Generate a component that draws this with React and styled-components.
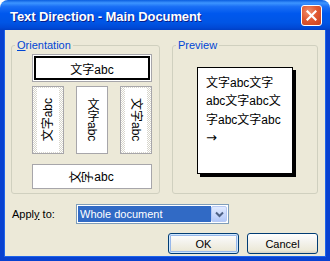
import React from "react";
import styled, { createGlobalStyle } from "styled-components";

const Global = createGlobalStyle`
  html, body {
    margin: 0;
    padding: 0;
    background: #ffffff;
  }
  body {
    font-family: "Liberation Sans", "Noto Sans CJK SC", sans-serif;
    font-size: 11px;
    color: #000;
  }
`;

const cjk = `"Liberation Sans", "Noto Sans CJK SC", sans-serif`;

const App = () => {
  return (
    <>
      <Global />
      <Window>
        <TitleBar>
          <Title>Text Direction - Main Document</Title>
          <CloseButton aria-label="Close">
            <svg width="11" height="11" viewBox="0 0 11 11">
              <path d="M1.5 1.5 L9.5 9.5 M9.5 1.5 L1.5 9.5" stroke="#fff" strokeWidth="2.2" strokeLinecap="square" />
            </svg>
          </CloseButton>
        </TitleBar>
        <Body>
          <Groups>
            <Group $width={149}>
              <Legend>
                <u>O</u>rientation
              </Legend>
              <OptionStack>
                <WideOption>
                  <Selected>文字abc</Selected>
                </WideOption>
                <TallRow>
                  <TallOption $dither>
                    <TallInner>
                      <SidewaysText $flip>文字abc</SidewaysText>
                    </TallInner>
                  </TallOption>
                  <TallOption>
                    <TallInner>
                      <UprightColumn>
                        <UprightChar>文字</UprightChar>
                        <SidewaysText>abc</SidewaysText>
                      </UprightColumn>
                    </TallInner>
                  </TallOption>
                  <TallOption $dither>
                    <TallInner>
                      <SidewaysText>文字abc</SidewaysText>
                    </TallInner>
                  </TallOption>
                </TallRow>
                <WideOption $short>
                  <OptionLabel>
                    <TurnedChar>文</TurnedChar>
                    <TurnedChar>字</TurnedChar>abc
                  </OptionLabel>
                </WideOption>
              </OptionStack>
            </Group>
            <Group $width={146}>
              <Legend>Preview</Legend>
              <PreviewArea>
                <Page>
                  <PageLine>文字abc文字</PageLine>
                  <PageLine>abc文字abc文</PageLine>
                  <PageLine>字abc文字abc</PageLine>
                  <PageLine $arrow>→</PageLine>
                </Page>
              </PreviewArea>
            </Group>
          </Groups>
          <ApplyRow>
            <FieldLabel>
              Appl<u>y</u> to:
            </FieldLabel>
            <Combo>
              <ComboValue>Whole document</ComboValue>
              <ComboButton>
                <svg width="9" height="7" viewBox="0 0 9 7">
                  <path d="M1 1.5 L4.5 5 L8 1.5" stroke="#4d6185" strokeWidth="2" fill="none" />
                </svg>
              </ComboButton>
            </Combo>
          </ApplyRow>
          <ButtonRow>
            <Button $default>OK</Button>
            <Button>Cancel</Button>
          </ButtonRow>
        </Body>
      </Window>
    </>
  );
};

const Window = styled.div`
  width: 330px;
  height: 261px;
  display: flex;
  flex-direction: column;
  overflow: hidden;
  border-radius: 8px 8px 0 0;
`;

const TitleBar = styled.div`
  height: 30px;
  flex: none;
  display: flex;
  align-items: center;
  justify-content: space-between;
  padding: 2px 8px 0 10px;
  box-sizing: border-box;
  background: linear-gradient(
    to bottom,
    #0a5ddf 0%,
    #3d95ff 10%,
    #1a6ff5 22%,
    #0058ee 45%,
    #0055e5 75%,
    #0049d6 92%,
    #003fc4 100%
  );
`;

const Title = styled.span`
  font-family: "Liberation Sans", sans-serif;
  font-weight: bold;
  font-size: 13px;
  color: #fff;
  text-shadow: 1px 1px 0 #0a1e8a;
  letter-spacing: -0.1px;
`;

const CloseButton = styled.div`
  width: 21px;
  height: 21px;
  box-sizing: border-box;
  border: 1px solid #fff;
  border-radius: 3px;
  margin-bottom: 2px;
  display: flex;
  align-items: center;
  justify-content: center;
  background: radial-gradient(circle at 35% 30%, #f0906e 0%, #e15a32 45%, #c8401f 100%);
`;

const Body = styled.div`
  flex: 1;
  background: #ece9d8;
  border-left: 4px solid #0841d0;
  border-right: 4px solid #0841d0;
  border-bottom: 4px solid #0841d0;
  box-shadow: inset 1px 0 0 #1d63ea, inset -1px 0 0 #1d63ea, inset 0 -1px 0 #1d63ea;
  padding: 9px 8px 0 7px;
  display: flex;
  flex-direction: column;
`;

const Groups = styled.div`
  display: flex;
  gap: 12px;
  height: 155px;
`;

const Group = styled.fieldset`
  margin: 0;
  padding: 0;
  min-width: 0;
  width: ${(p) => p.$width}px;
  box-sizing: border-box;
  border: 1px solid #d0d0bf;
  border-radius: 3px;
`;

const Legend = styled.legend`
  margin-left: 3px;
  padding: 0 2px;
  font-size: 11px;
  line-height: 12px;
  color: #0046d5;
  font-family: "Liberation Sans", sans-serif;
`;

const OptionStack = styled.div`
  display: flex;
  flex-direction: column;
  width: 120px;
  padding: 3px 0 0 20px;
`;

const WideOption = styled.div`
  height: ${(p) => (p.$short ? 25 : 28)}px;
  box-sizing: border-box;
  border: 1px solid #a7a6aa;
  background: #fff;
  padding: 1px;
  display: flex;
  align-items: center;
  justify-content: center;
  margin-top: ${(p) => (p.$short ? 10 : 0)}px;
`;

const Selected = styled.div`
  width: 100%;
  height: 100%;
  box-sizing: border-box;
  border: 2px solid #000;
  display: flex;
  align-items: center;
  justify-content: center;
  font-family: ${cjk};
  font-size: 12px;
`;

const OptionLabel = styled.div`
  font-family: ${cjk};
  font-size: 12px;
  display: flex;
  align-items: center;
`;

const TurnedChar = styled.span`
  display: inline-block;
  transform: rotate(-90deg);
  line-height: 12px;
`;

const TallRow = styled.div`
  margin-top: 4px;
  display: flex;
  justify-content: space-between;
  height: 68px;
`;

const TallOption = styled.div`
  width: 32px;
  box-sizing: border-box;
  border: 1px solid #a7a6aa;
  padding: ${(p) => (p.$dither ? "1px 4px" : "0")};
  background-color: #fff;
  background-image: ${(p) =>
    p.$dither
      ? "conic-gradient(#d8d6cc 25%, #ffffff 0 50%, #d8d6cc 0 75%, #ffffff 0)"
      : "none"};
  background-size: 2px 2px;
  display: flex;
`;

const TallInner = styled.div`
  flex: 1;
  background: #fff;
  display: flex;
  align-items: center;
  justify-content: center;
`;

const SidewaysText = styled.span`
  font-family: ${cjk};
  font-size: 12px;
  line-height: 14px;
  writing-mode: vertical-rl;
  text-orientation: sideways;
  transform: ${(p) => (p.$flip ? "rotate(180deg)" : "none")};
`;

const UprightColumn = styled.div`
  display: flex;
  flex-direction: column;
  align-items: center;
`;

const UprightChar = styled.span`
  font-family: ${cjk};
  font-size: 12px;
  line-height: 14px;
  writing-mode: vertical-rl;
  text-orientation: upright;
`;

const PreviewArea = styled.div`
  padding: 16px 0 0 24px;
`;

const Page = styled.div`
  width: 96px;
  height: 107px;
  box-sizing: border-box;
  border: 1px solid #000;
  background: #fff;
  box-shadow: 3px 3px 0 #000;
  padding: 6px 0 0 8px;
  font-family: ${cjk};
  font-size: 12px;
`;

const PageLine = styled.div`
  line-height: 18.4px;
  white-space: nowrap;
  font-family: ${(p) => (p.$arrow ? `"DejaVu Sans", sans-serif` : cjk)};
  font-size: ${(p) => (p.$arrow ? 13 : 12)}px;
`;

const ApplyRow = styled.div`
  margin-top: 10px;
  height: 20px;
  display: flex;
  align-items: center;
  padding-left: 1px;
`;

const FieldLabel = styled.span`
  width: 64px;
  font-size: 11px;
`;

const Combo = styled.div`
  width: 153px;
  height: 20px;
  box-sizing: border-box;
  border: 1px solid #7f9db9;
  background: #fff;
  padding: 1px;
  display: flex;
`;

const ComboValue = styled.div`
  flex: 1;
  background: #316ac5;
  color: #fff;
  font-size: 11px;
  line-height: 16px;
  padding-left: 2px;
`;

const ComboButton = styled.div`
  width: 16px;
  box-sizing: border-box;
  border: 1px solid #b6c9f4;
  border-radius: 2px;
  background: linear-gradient(to bottom, #e1eafe 0%, #c6d6fc 60%, #b3c8f8 100%);
  display: flex;
  align-items: center;
  justify-content: center;
`;

const ButtonRow = styled.div`
  margin-top: 9px;
  display: flex;
  justify-content: flex-end;
  gap: 8px;
`;

const Button = styled.div`
  width: 71px;
  height: 21px;
  box-sizing: border-box;
  border: 1px solid #003c74;
  border-radius: 3px;
  background: linear-gradient(to bottom, #ffffff 0%, #f4f3ee 40%, #ece9d8 85%, #d6d0c5 100%);
  box-shadow: ${(p) =>
    p.$default ? "inset 0 0 0 1px #cee7ff, inset 0 0 0 2px #98b8ea" : "none"};
  display: flex;
  align-items: center;
  justify-content: center;
  font-size: 11px;
`;

export default App;
